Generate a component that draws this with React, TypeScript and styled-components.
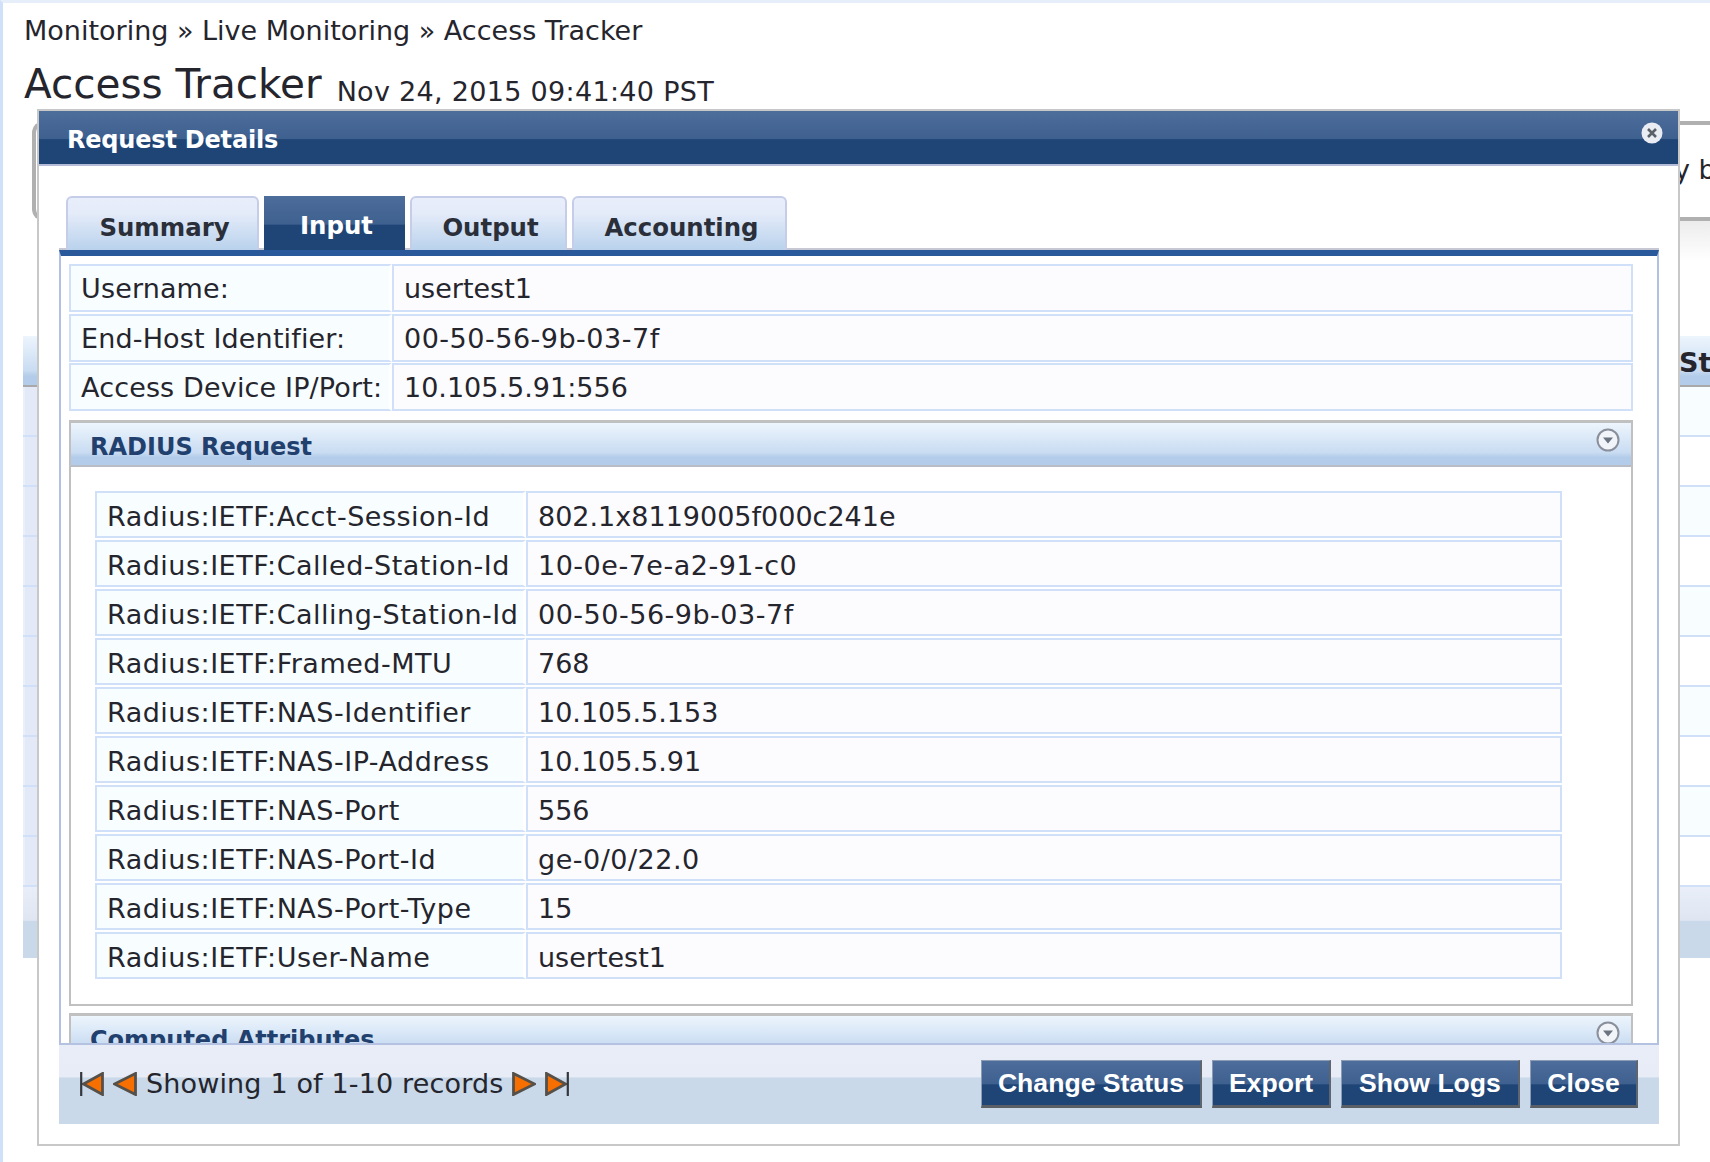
import React from 'react';
import styled, { createGlobalStyle } from 'styled-components';

const GlobalStyle = createGlobalStyle`
  html, body {
    margin: 0;
    padding: 0;
    height: 100%;
    background: #fff;
    overflow: hidden;
  }
  #root { height: 100%; }
  * { box-sizing: border-box; }
`;

const headerGradient = `linear-gradient(180deg, #4d6d9b 0, #3f6190 52%, #1f4577 54%, #1f4577 100%)`;
const panelGradient = `linear-gradient(180deg, #edf5fd 0, #c9dcf2 70%, #b3cce9 82%, #b3cce9 100%)`;

const Page = styled.div`
  position: relative;
  width: 1710px;
  height: 1162px;
  overflow: hidden;
  border-top: 3px solid #e6eefa;
  border-left: 3px solid #cfe0f8;
  padding: 12px 0 0 21px;
  font-family: 'DejaVu Sans', Verdana, sans-serif;
  font-size: 27px;
  color: #25252d;
`;

const Crumbs = styled.div`
  height: 38px;
  line-height: 32px;
`;

const TitleRow = styled.div`
  height: 68px;
  padding-top: 4px;
  white-space: nowrap;
`;

const Title = styled.h1`
  display: inline;
  margin: 0;
  font-size: 40.5px;
  font-weight: 400;
  line-height: 54px;
`;

const Stamp = styled.span`
  margin-left: 15px;
  font-size: 27px;
  letter-spacing: 0.3px;
  vertical-align: -3px;
`;

const FilterBox = styled.div`
  width: 1720px;
  margin-left: 8px;
  height: 100px;
  border: 4px solid #b0b0b0;
  border-right: 0;
  border-radius: 12px 0 0 12px;
  padding: 29px 0 0 1638px;
  white-space: nowrap;
`;

const FilterShade = styled.div`
  width: 1720px;
  margin-left: 14px;
  height: 40px;
  background: linear-gradient(180deg, #ececec, #fff);
`;

const BackTable = styled.div`
  width: 1700px;
  margin: 75px 0 0 -1px;
`;

const BackHead = styled.div`
  height: 51px;
  padding-left: 1656px;
  white-space: nowrap;
  background: ${panelGradient};
  border-bottom: 2px solid #a9a9a9;
  font-weight: 700;
  line-height: 53px;
`;

const BackRow = styled.div<{ $alt: boolean }>`
  height: 50px;
  background: ${(p) => (p.$alt ? '#fff' : '#f8feff')};
  border-bottom: 2px solid #cfe0f8;
`;

const BackCell = styled.div`
  width: 60px;
  height: 100%;
  border-left: 2px solid #e8f0fb;
  background: #e3e9f6;
`;

const BackFoot = styled.div`
  height: 71px;
  background: linear-gradient(180deg, #e9eef8 0, #dfe6f2 47%, #c9d9e9 48%, #c9d9e9 100%);
`;

const Modal = styled.div`
  position: absolute;
  left: 34px;
  top: 106px;
  width: 1643px;
  height: 1037px;
  background: #fff;
  border: 2px solid #c8c8c8;
  display: flex;
  flex-direction: column;
`;

const ModalHead = styled.div`
  position: relative;
  flex: none;
  height: 55px;
  padding: 0 0 0 28px;
  background: ${headerGradient};
  border-bottom: 2px solid #b5bcd8;
  color: #fff;
  font-size: 24px;
  letter-spacing: -0.2px;
  font-weight: 700;
  line-height: 59px;
`;

const CloseIcon = styled.svg`
  position: absolute;
  right: 14px;
  top: 10px;
`;

const Tabs = styled.div`
  flex: none;
  display: flex;
  gap: 5px;
  height: 84px;
  margin-left: 20px;
  width: 1600px;
  padding: 30px 0 0 7px;
  border-bottom: 2px solid #c6c9d4;
`;

const Tab = styled.div<{ $width: number; $active?: boolean }>`
  width: ${(p) => p.$width}px;
  height: 54px;
  flex: none;
  padding-left: 4px;
  text-align: center;
  font-size: 24.4px;
  font-weight: 700;
  line-height: 60px;
  border-radius: ${(p) => (p.$active ? '0' : '6px 6px 0 0')};
  border: ${(p) => (p.$active ? '0' : '2px solid #c5cde8')};
  border-bottom: 0;
  color: ${(p) => (p.$active ? '#fff' : '#2a2f3a')};
  background: ${(p) => (p.$active ? headerGradient : 'linear-gradient(180deg, #e9eefb 0, #e4ebf9 30%, #b9d2ec 100%)')};
`;

const TabBody = styled.div`
  flex: none;
  position: relative;
  margin-left: 20px;
  width: 1600px;
  height: 793px;
  overflow: hidden;
  border-top: 6px solid #29599a;
  border-left: 2px solid #b3c0e0;
  border-right: 2px solid #b3c0e0;
  padding: 8px 0 0 8px;
`;

const Grid = styled.div<{ $label: number; $width: number }>`
  display: grid;
  grid-template-columns: ${(p) => p.$label}px 1fr;
  width: ${(p) => p.$width}px;
`;

const Label = styled.div<{ $h: number; $lh: number; $gap: number; $spacing: number }>`
  height: ${(p) => p.$h}px;
  margin-bottom: ${(p) => p.$gap}px;
  padding-left: 10px;
  line-height: ${(p) => p.$lh}px;
  letter-spacing: ${(p) => p.$spacing}px;
  white-space: nowrap;
  background: #f8feff;
  border: 2px solid #cfe0f8;
  border-width: 2px 0 2px 2px;
  border-right: 3px solid #fff;
`;

const Value = styled.div<{ $h: number; $lh: number; $gap: number; $spaced: boolean }>`
  height: ${(p) => p.$h}px;
  margin-bottom: ${(p) => p.$gap}px;
  padding-left: 10px;
  line-height: ${(p) => p.$lh}px;
  letter-spacing: ${(p) => (p.$spaced ? 0.5 : 0)}px;
  white-space: nowrap;
  background: #fcfcff;
  border: 2px solid #cfe0f8;
`;

const Section = styled.div`
  width: 1564px;
  margin-top: 7px;
  border: 2px solid #c0c0c0;
  border-top-width: 3px;
`;

const SectionHead = styled.div`
  position: relative;
  height: 44px;
  padding-left: 19px;
  background: ${panelGradient};
  border-bottom: 2px solid #b8bcc4;
  color: #21406e;
  font-size: 24px;
  font-weight: 700;
  line-height: 48px;
`;

const Toggle = styled.svg`
  position: absolute;
  right: 10px;
  top: 4px;
`;

const SectionBody = styled.div`
  padding: 24px 0 23px 24px;
`;

const Footer = styled.div`
  flex: none;
  margin-left: 20px;
  width: 1600px;
  height: 81px;
  display: flex;
  align-items: center;
  justify-content: space-between;
  padding: 0 21px 2px 21px;
  background: linear-gradient(180deg, #e8edf7 0, #e7ecf6 40%, #c9d9e9 42%, #c9d9e9 100%);
  border-top: 2px solid #b5c1e0;
`;

const Pager = styled.div`
  display: flex;
  align-items: center;
  gap: 9px;
  letter-spacing: 0.15px;
`;

const PagerIcon = styled.svg<{ $flip?: boolean }>`
  flex: none;
  transform: ${(p) => (p.$flip ? 'scaleX(-1)' : 'none')};
`;

const Actions = styled.div`
  display: flex;
  gap: 10px;
`;

const Action = styled.div<{ $width: number }>`
  width: ${(p) => p.$width}px;
  height: 48px;
  text-align: center;
  color: #fff;
  font-family: 'Liberation Sans', Arial, sans-serif;
  font-size: 26.6px;
  font-weight: 700;
  line-height: 44px;
  background: ${headerGradient};
  border: 1px solid #8c9bb4;
  border-right: 2px solid #5d6670;
  border-bottom: 3px solid #5a5f66;
`;

const loginRows: [string, string][] = [
  ['Username:', 'usertest1'],
  ['End-Host Identifier:', '00-50-56-9b-03-7f'],
  ['Access Device IP/Port:', '10.105.5.91:556'],
];

const radiusRows: [string, string][] = [
  ['Radius:IETF:Acct-Session-Id', '802.1x8119005f000c241e'],
  ['Radius:IETF:Called-Station-Id', '10-0e-7e-a2-91-c0'],
  ['Radius:IETF:Calling-Station-Id', '00-50-56-9b-03-7f'],
  ['Radius:IETF:Framed-MTU', '768'],
  ['Radius:IETF:NAS-Identifier', '10.105.5.153'],
  ['Radius:IETF:NAS-IP-Address', '10.105.5.91'],
  ['Radius:IETF:NAS-Port', '556'],
  ['Radius:IETF:NAS-Port-Id', 'ge-0/0/22.0'],
  ['Radius:IETF:NAS-Port-Type', '15'],
  ['Radius:IETF:User-Name', 'usertest1'],
];

const ToggleIcon = () => (
  <Toggle width="26" height="26" viewBox="0 0 26 26">
    <circle cx="13" cy="13" r="10.5" fill="#f1f4f8" stroke="#8a8f9c" strokeWidth="2" />
    <path d="M8 10.5h10l-5 6z" fill="#6b7280" />
  </Toggle>
);

const Arrow = ({ flip, bar }: { flip?: boolean; bar?: boolean }) => (
  <PagerIcon $flip={flip} width="24" height="24" viewBox="0 0 24 24">
    <path d={bar ? 'M1.5 1.5L20.5 12L1.5 22.5z' : 'M1.5 1.5L22.5 12L1.5 22.5z'} fill="#f76f00" stroke="#55504a" strokeWidth="2.8" />
    {bar && <path d="M22.8 0v24" stroke="#33363c" strokeWidth="2.2" />}
  </PagerIcon>
);

export default function App() {
  return (
    <Page>
      <GlobalStyle />
      <Crumbs>Monitoring » Live Monitoring » Access Tracker</Crumbs>
      <TitleRow>
        <Title>Access Tracker</Title>
        <Stamp>Nov 24, 2015 09:41:40 PST</Stamp>
      </TitleRow>
      <FilterBox>y b</FilterBox>
      <FilterShade />
      <BackTable>
        <BackHead>Status</BackHead>
        {Array.from({ length: 10 }, (_, i) => (
          <BackRow key={i} $alt={i % 2 === 1}>
            <BackCell />
          </BackRow>
        ))}
        <BackFoot />
      </BackTable>

      <Modal>
        <ModalHead>
          Request Details
          <CloseIcon width="24" height="24" viewBox="0 0 24 24">
            <circle cx="12" cy="12" r="10.5" fill="#e9ecf2" />
            <path d="M8 8l8 8M16 8l-8 8" stroke="#5a6068" strokeWidth="2.6" />
          </CloseIcon>
        </ModalHead>
        <Tabs>
          <Tab $width={193}>Summary</Tab>
          <Tab $width={141} $active>Input</Tab>
          <Tab $width={157}>Output</Tab>
          <Tab $width={215}>Accounting</Tab>
        </Tabs>
        <TabBody>
          <Grid $label={323} $width={1564}>
            {loginRows.map(([k, v]) => (
              <React.Fragment key={k}>
                <Label $h={48} $lh={46} $gap={1.5} $spacing={0.15}>{k}</Label>
                <Value $h={48} $lh={46} $gap={1.5} $spaced={v.includes('-')}>{v}</Value>
              </React.Fragment>
            ))}
          </Grid>
          <Section>
            <SectionHead>
              RADIUS Request
              <ToggleIcon />
            </SectionHead>
            <SectionBody>
              <Grid $label={431} $width={1467}>
                {radiusRows.map(([k, v]) => (
                  <React.Fragment key={k}>
                    <Label $h={47} $lh={48} $gap={2} $spacing={0.5}>{k}</Label>
                    <Value $h={47} $lh={48} $gap={2} $spaced={v.includes('-')}>{v}</Value>
                  </React.Fragment>
                ))}
              </Grid>
            </SectionBody>
          </Section>
          <Section>
            <SectionHead>
              Computed Attributes
              <ToggleIcon />
            </SectionHead>
          </Section>
        </TabBody>
        <Footer>
          <Pager>
            <Arrow flip bar />
            <Arrow flip />
            <span>Showing 1 of 1-10 records</span>
            <Arrow />
            <Arrow bar />
          </Pager>
          <Actions>
            <Action $width={221}>Change Status</Action>
            <Action $width={119}>Export</Action>
            <Action $width={179}>Show Logs</Action>
            <Action $width={108}>Close</Action>
          </Actions>
        </Footer>
      </Modal>
    </Page>
  );
}
